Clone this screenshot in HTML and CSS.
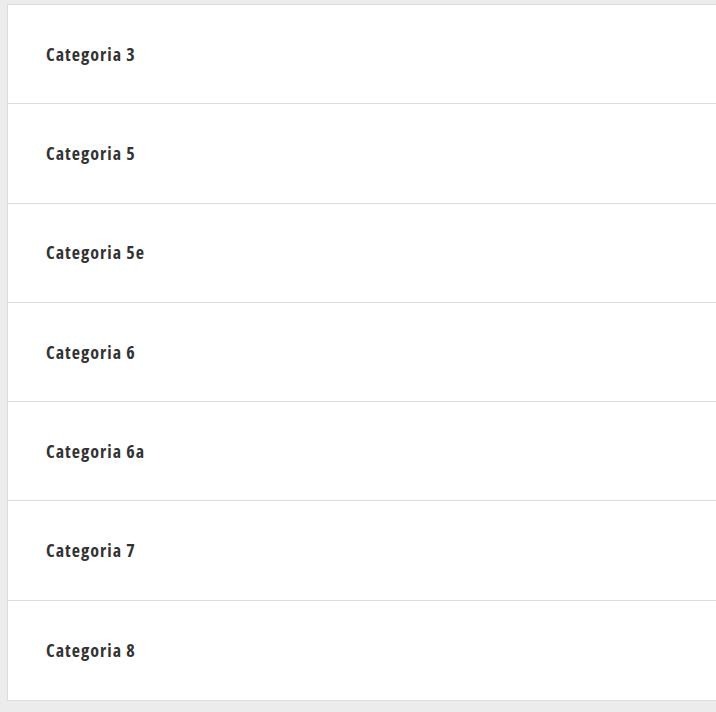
FILE: index.html
```html
<!DOCTYPE html>
<html lang="it">
<head>
<meta charset="utf-8">
<link rel="stylesheet" href="styles.css">
</head>
<body>
<ul class="list">
  <li class="item">Categoria 3</li>
  <li class="item">Categoria 5</li>
  <li class="item">Categoria 5e</li>
  <li class="item">Categoria 6</li>
  <li class="item">Categoria 6a</li>
  <li class="item">Categoria 7</li>
  <li class="item">Categoria 8</li>
</ul>
</body>
</html>
```
FILE: styles.css
```css
html, body {
  margin: 0;
  padding: 0;
  background: #ececec;
}
body {
  padding: 4px 0 0 7px;
  font-family: "Open Sans", "DejaVu Sans", sans-serif;
}
.list {
  list-style: none;
  margin: 0;
  padding: 0;
  width: 720px;
  background: #fff;
  border: 1px solid #dcdcdc;
}
.item {
  display: flex;
  align-items: center;
  padding-left: 38px;
  padding-bottom: 1px;
  box-sizing: border-box;
  height: 99.3px;
  font-size: 18px;
  font-weight: 700;
  font-stretch: 75%;
  letter-spacing: 1px;
  color: #333;
  border-bottom: 1px solid #dcdcdc;
}
.item:last-child {
  border-bottom: none;
}
```
